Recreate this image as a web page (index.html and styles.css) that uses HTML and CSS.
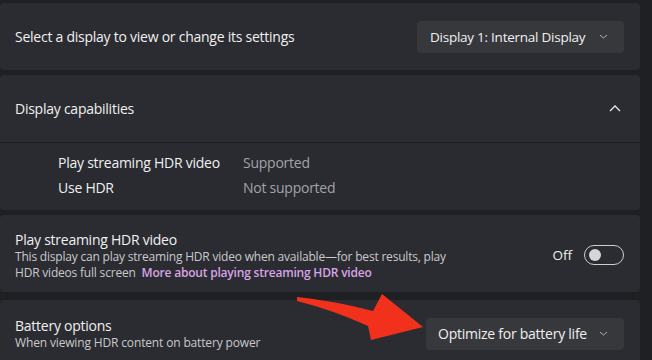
FILE: index.html
```html
<!DOCTYPE html>
<html>
<head>
<meta charset="utf-8">
<link rel="stylesheet" href="styles.css">
</head>
<body>
<div class="page">
  <div class="card row">
    <div class="title">Select a display to view or change its settings</div>
    <div class="dropdown dd1">
      <span>Display 1: Internal Display</span>
      <svg class="chev" width="9" height="5" viewBox="0 0 9 5"><polyline points="1,1 4.5,4 8,1" fill="none" stroke="#b4b4b6" stroke-width="1"/></svg>
    </div>
  </div>

  <div class="card expander">
    <div class="row exp-head">
      <div class="title">Display capabilities</div>
      <svg class="up" width="12" height="7" viewBox="0 0 12 7"><polyline points="1,6 6,1 11,6" fill="none" stroke="#e8e8e8" stroke-width="1.3"/></svg>
    </div>
    <div class="exp-body">
      <div class="cap"><span class="cap-label">Play streaming HDR video</span><span class="cap-value">Supported</span></div>
      <div class="cap"><span class="cap-label">Use HDR</span><span class="cap-value">Not supported</span></div>
    </div>
  </div>

  <div class="card row tall">
    <div class="text">
      <div class="title">Play streaming HDR video</div>
      <div class="desc">This display can play streaming HDR video when available—for best results, play<br>HDR videos full screen <a class="link">More about playing streaming HDR video</a></div>
    </div>
    <div class="toggle-wrap">
      <span class="off">Off</span>
      <span class="toggle"><span class="knob"></span></span>
    </div>
  </div>

  <div class="card row battery">
    <div class="text">
      <div class="title">Battery options</div>
      <div class="desc sub">When viewing HDR content on battery power</div>
    </div>
    <div class="dropdown dd2">
      <span>Optimize for battery life</span>
      <svg class="chev" width="9" height="5" viewBox="0 0 9 5"><polyline points="1,1 4.5,4 8,1" fill="none" stroke="#b4b4b6" stroke-width="1"/></svg>
    </div>
  </div>

  <svg class="arrow" width="140" height="52" viewBox="290 290 140 52">
    <path d="M297,297 Q335,301 373,311 L382,294 L423,327 L371,340 L368,326 Q333,310 297,301 Z" fill="#f2311c"/>
  </svg>
</div>
</body>
</html>
```

FILE: styles.css
```css
html, body {
  margin: 0;
  padding: 0;
  background: #1f2024;
  overflow: hidden;
}
body {
  width: 652px;
  height: 360px;
  font-family: "Open Sans", "Noto Sans", sans-serif;
  color: #ececec;
}
.page {
  position: relative;
  width: 640px;
  padding-top: 3px;
  display: flex;
  flex-direction: column;
  gap: 5px;
}
.card {
  background: #2b2c31;
  border-radius: 4px;
}
.row {
  display: flex;
  align-items: center;
  justify-content: space-between;
  height: 67px;
  padding: 0 16px 0 15px;
  box-sizing: border-box;
}
.tall {
  height: 77px;
  padding-top: 3px;
}
.battery {
  margin-top: 3px;
}
.title {
  font-size: 14px;
  letter-spacing: -0.25px;
  color: #f0f0f0;
  line-height: 19px;
}
.desc {
  font-size: 12px;
  letter-spacing: -0.2px;
  color: #c9c9cc;
  line-height: 16px;
}
.sub {
  letter-spacing: -0.15px;
}
.link {
  color: #d7a3e6;
  font-weight: 600;
  margin-left: 3px;
}
.dropdown {
  display: flex;
  align-items: center;
  justify-content: space-between;
  height: 32px;
  box-sizing: border-box;
  padding: 0 16px 0 13px;
  background: #37383c;
  border-radius: 4px;
  font-size: 13.5px;
  letter-spacing: -0.25px;
  color: #f0f0f0;
}
.dd1 { width: 207px; }
.dd2 { width: 198px; padding-left: 12px; font-size: 14px; }
.chev { display: block; }
.expander {
  display: flex;
  flex-direction: column;
}
.exp-head {
  border-bottom: 1px solid #1d1e22;
  height: 68px;
}
.up { margin-right: 3px; }
.exp-body {
  background: #292b31;
  height: 67px;
  padding: 7px 0 0 58px;
  box-sizing: border-box;
  border-radius: 0 0 4px 4px;
}
.cap {
  display: flex;
  font-size: 14px;
  letter-spacing: -0.25px;
  line-height: 25px;
}
.cap-label {
  width: 185px;
  color: #f0f0f0;
}
.cap-value {
  color: #a3a3a6;
}
.toggle-wrap {
  display: flex;
  align-items: center;
  gap: 12px;
}
.off {
  font-size: 13.5px;
  color: #f0f0f0;
}
.toggle {
  width: 40px;
  height: 20px;
  box-sizing: border-box;
  border: 1px solid #cfcfcf;
  border-radius: 10px;
  display: flex;
  align-items: center;
  padding-left: 4px;
}
.knob {
  width: 12px;
  height: 12px;
  border-radius: 50%;
  background: #d6d6d6;
}
.arrow {
  position: absolute;
  left: 290px;
  top: 290px;
}
```
